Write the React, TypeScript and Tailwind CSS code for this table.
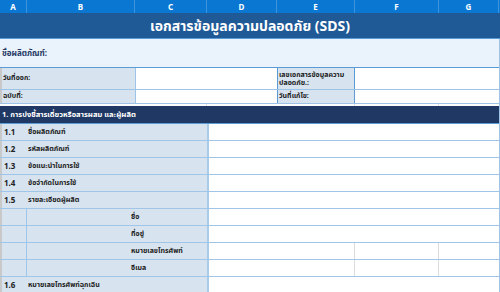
import React from "react";

const cols = ["A", "B", "C", "D", "E", "F", "G"];
const colW = ["w-[27px]", "w-[108px]", "w-[72px]", "w-[70px]", "w-[78px]", "w-[84px]", "w-[60px]"];

const font = { fontFamily: '"Noto Sans", "Noto Sans Thai", Tahoma, "DejaVu Sans", sans-serif' };

type Item = { no?: string; label: string; sub?: boolean; split?: boolean };

const items: Item[] = [
  { no: "1.1", label: "ชื่อผลิตภัณฑ์" },
  { no: "1.2", label: "รหัสผลิตภัณฑ์" },
  { no: "1.3", label: "ข้อแนะนำในการใช้" },
  { no: "1.4", label: "ข้อจำกัดในการใช้" },
  { no: "1.5", label: "รายละเอียดผู้ผลิต" },
  { label: "ชื่อ", sub: true },
  { label: "ที่อยู่", sub: true },
  { label: "หมายเลขโทรศัพท์", sub: true, split: true },
  { label: "อีเมล", sub: true, split: true },
  { no: "1.6", label: "หมายเลขโทรศัพท์ฉุกเฉิน" },
];

export default function App() {
  return (
    <div className="w-[500px] h-[292px] overflow-hidden bg-white" style={font}>
      {/* column letters */}
      <div className="flex h-[13px] bg-[#0a78d2]">
        {cols.map((c, i) => (
          <div
            key={c}
            className={`${colW[i]} flex items-center justify-center text-[8px] font-bold text-white border-r border-[#3d93dc] leading-none`}
          >
            {c}
          </div>
        ))}
      </div>

      {/* title */}
      <div className="h-[26px] bg-[#1f5a97] flex items-center justify-center text-white font-bold text-[14px] border-b border-[#5b9bd5]">
        เอกสารข้อมูลความปลอดภัย (SDS)
      </div>

      <div className="w-[500px] border-r border-[#9dc3e6]">
        {/* product name */}
        <div className="h-[29px] bg-[#eaf2fb] flex items-center pl-[2px] text-[8px] font-bold text-[#1f3864] border-b border-[#5b9bd5]">
          ชื่อผลิตภัณฑ์:
        </div>

        {/* issue rows */}
        <div className="flex h-[22px] border-b border-[#9dc3e6] text-[7px] font-bold text-[#222]">
          <div className="w-[135px] bg-[#d7e4f0] flex items-center pl-[1px] border-l-2 border-[#c9c9c9]">วันที่ออก:</div>
          <div className="w-[142px] border-l border-[#9dc3e6]"></div>
          <div className="w-[78px] bg-[#d7e4f0] border-x border-[#5b9bd5] flex items-center pl-[1px] leading-[8px]">
            เลขเอกสารข้อมูลความ
            <br />
            ปลอดภัย.:
          </div>
          <div className="flex-1"></div>
        </div>
        <div className="flex h-[14px] border-b border-[#9dc3e6] text-[7px] font-bold text-[#222]">
          <div className="w-[135px] bg-[#d7e4f0] flex items-center pl-[1px] border-l-2 border-[#c9c9c9]">ฉบับที่:</div>
          <div className="w-[142px] border-l border-[#9dc3e6]"></div>
          <div className="w-[78px] bg-[#d7e4f0] border-x border-[#5b9bd5] flex items-center pl-[1px]">วันที่แก้ไข:</div>
          <div className="flex-1"></div>
        </div>
        <div className="flex h-[2px]">
          <div className="w-[207px] border-r border-[#e2e2e2]"></div>
          <div className="w-[148px] border-r border-[#e2e2e2]"></div>
          <div className="w-[84px] border-r border-[#e2e2e2]"></div>
        </div>

        {/* section header */}
        <div className="h-[18px] bg-[#203864] flex items-center pl-[2px] text-white font-bold text-[7.5px] border-b border-[#5b9bd5]">
          1. การบ่งชี้สารเดี่ยวหรือสารผสม และผู้ผลิต
        </div>

        {items.map((it, i) => (
          <div key={i} className="flex h-[17px] border-b border-[#9fc5e8] text-[7px] font-bold text-[#222]">
            <div
              className={`w-[27px] bg-[#d7e4f0] flex items-center pl-[2px] text-[8px] border-l-2 border-[#c9c9c9] ${
                it.sub ? "border-r border-r-[#9fc5e8]" : ""
              }`}
            >
              {it.no}
            </div>
            <div className={`w-[180px] bg-[#d7e4f0] flex items-center ${it.sub ? "pl-[104px]" : "pl-[1px]"}`}>
              {it.label}
            </div>
            {it.split ? (
              <div className="flex-1 flex border-l-2 border-[#a9cbe8]">
                <div className="w-[146px] border-r border-[#dcdcdc]"></div>
                <div className="w-[84px] border-r border-[#dcdcdc]"></div>
                <div className="flex-1"></div>
              </div>
            ) : (
              <div className="flex-1 border-l-2 border-[#a9cbe8]"></div>
            )}
          </div>
        ))}
      </div>
    </div>
  );
}
